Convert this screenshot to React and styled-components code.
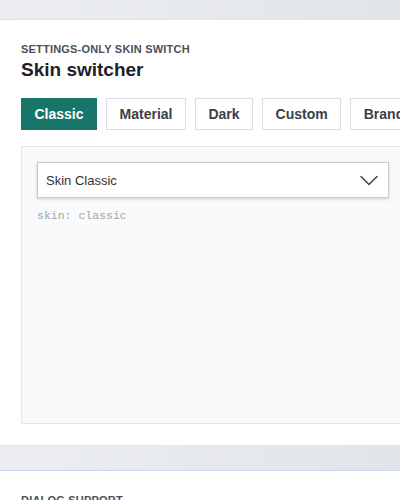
import React from "react";
import styled, { createGlobalStyle } from "styled-components";

const Global = createGlobalStyle`
  html, body { margin: 0; padding: 0; overflow: hidden; }
  body {
    background: linear-gradient(90deg, #eceef1 0%, #e1e4e8 100%);
    font-family: "Liberation Sans", Arial, sans-serif;
  }
`;

const Page = styled.div`
  width: 425px;
  padding-top: 19px;
  display: flex;
  flex-direction: column;
  gap: 24px;
`;

const Section = styled.section`
  background: #ffffff;
  border-top: 1px solid ${(p) => p.$topLine};
  border-bottom: 1px solid #d2eee8;
  padding: 22px 21px 21px;
  display: flex;
  flex-direction: column;
`;

const Eyebrow = styled.div`
  font-size: 11px;
  line-height: 14px;
  font-weight: 700;
  letter-spacing: 0.2px;
  color: #4a515a;
  text-transform: uppercase;
`;

const Title = styled.h2`
  margin: 2px 0 0;
  font-size: 19px;
  line-height: 24px;
  font-weight: 700;
  color: #1e2227;
`;

const Tabs = styled.div`
  display: flex;
  gap: 9px;
  margin-top: 16px;
`;

const Tab = styled.button`
  height: 32px;
  padding: 0 12.5px;
  border: 1px solid ${(p) => (p.$active ? "#17756a" : "#dcdee1")};
  background: ${(p) => (p.$active ? "#17756a" : "#ffffff")};
  color: ${(p) => (p.$active ? "#ffffff" : "#3a3f46")};
  font-family: "Liberation Sans", Arial, sans-serif;
  font-size: 14px;
  font-weight: 700;
  border-radius: 0;
  white-space: nowrap;
  flex-shrink: 0;
`;

const Panel = styled.div`
  margin-top: 16px;
  background: #f9fafb;
  border: 1px solid #e4e6e9;
  height: 246px;
  padding: 15px;
  display: flex;
  flex-direction: column;
  gap: 11px;
`;

const Select = styled.div`
  height: 36px;
  background: #fff;
  border: 1px solid #c9cbce;
  box-shadow: 0 1px 3px rgba(0, 0, 0, 0.18);
  display: flex;
  align-items: center;
  justify-content: space-between;
  padding: 0 10px 0 8px;
  box-sizing: border-box;
  width: 352px;
`;

const SelectText = styled.span`
  font-size: 13px;
  color: #2f3338;
`;

const Code = styled.div`
  font-family: "Liberation Mono", "Courier New", monospace;
  font-size: 11.5px;
  line-height: 14px;
  color: #a2a4a7;
`;

const Chevron = () => (
  <svg width="18" height="11" viewBox="0 0 18 11" fill="none">
    <path d="M1 1.5 L9 9.5 L17 1.5" stroke="#3d4147" strokeWidth="1.5" strokeLinecap="round" strokeLinejoin="round" />
  </svg>
);

export default function App() {
  const tabs = [
    { label: "Classic", active: true },
    { label: "Material" },
    { label: "Dark" },
    { label: "Custom" },
    { label: "Brand" },
  ];
  return (
    <>
      <Global />
      <Page>
        <Section $topLine="#cdeee7">
          <Eyebrow>Settings-only skin switch</Eyebrow>
          <Title>Skin switcher</Title>
          <Tabs>
            {tabs.map((t) => (
              <Tab key={t.label} $active={t.active}>
                {t.label}
              </Tab>
            ))}
          </Tabs>
          <Panel>
            <Select>
              <SelectText>Skin Classic</SelectText>
              <Chevron />
            </Select>
            <Code>skin: classic</Code>
          </Panel>
        </Section>
        <Section $topLine="#c9d9f0">
          <Eyebrow>Dialog support</Eyebrow>
        </Section>
      </Page>
    </>
  );
}
